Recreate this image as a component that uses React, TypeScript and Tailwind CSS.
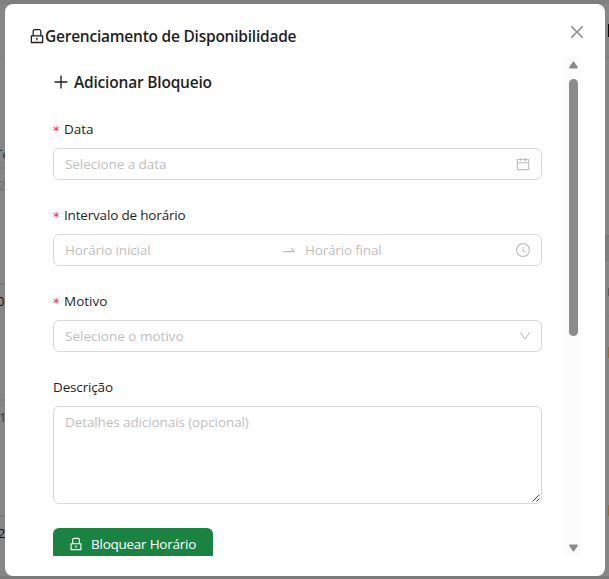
import type { ReactNode } from 'react';
import {
  AiOutlineCalendar,
  AiOutlineClockCircle,
  AiOutlineClose,
  AiOutlineDown,
  AiOutlineLock,
  AiOutlinePlus,
  AiOutlineSwapRight,
} from 'react-icons/ai';

function Field({ label, required, children }: { label: ReactNode; required?: boolean; children: ReactNode }) {
  return (
    <div className="mb-6">
      <div className="flex h-[22px] items-center mb-2 text-[13.5px] text-[#1f1f1f]">
        {required && (
          <span className="mr-1 w-[7px] pt-[3px] font-['DejaVu_Sans',sans-serif] text-[13px] leading-none text-[#ff2a2e]">*</span>
        )}
        {label}
      </div>
      {children}
    </div>
  );
}

const box =
  'flex h-8 items-center rounded-md border border-[#d9d9d9] bg-white px-[11px] text-[13.5px] text-[#bfbfbf]';

function Backdrop() {
  return (
    <div className="absolute inset-0 overflow-hidden bg-[#868686] text-[13px] text-[#111]">
      <div className="absolute inset-x-0 top-0 h-1 bg-[#7f7f7f]" />
      <div className="absolute inset-x-0 bottom-0 h-[3px] bg-[#7b7b7b]" />
      <div className="absolute left-0 top-[57px] h-px w-[5px] bg-[#7c7c7c]" />
      <div className="absolute left-0 top-[167px] h-[2px] w-[5px] bg-[#7c7c7c]" />
      <div className="absolute left-0 top-[283px] h-[2px] w-[5px] bg-[#7c7c7c]" />
      <div className="absolute left-0 top-[399px] h-[2px] w-[5px] bg-[#7c7c7c]" />
      <div className="absolute left-0 top-[515px] h-[2px] w-[5px] bg-[#7c7c7c]" />
      <span className="absolute -left-[5px] top-[145px] text-[#123f55]">Te</span>
      <span className="absolute -left-[2px] top-[176px] text-[#6b6b6b]">2</span>
      <span className="absolute -left-[3px] top-[292px]">0</span>
      <span className="absolute -left-[1px] top-[408px] text-[#123f55]">1</span>
      <span className="absolute -left-[2px] top-[524px]">2</span>
      <div className="absolute right-0 top-[24px] h-[13px] w-px bg-[#080808]" />
      <div className="absolute right-0 top-[57px] h-px w-1 bg-[#7c7c7c]" />
      <div className="absolute right-0 top-[235px] h-[26px] w-1 border-t-2 border-[#777] bg-[#7f7f7f]" />
      <div className="absolute right-0 top-[288px] h-[8px] w-px bg-[#5c5c5c]" />
      <div className="absolute right-0 top-[316px] h-px w-1 bg-[#7c7c7c]" />
      <div className="absolute right-0 top-[347px] h-[11px] w-px bg-[#9a6d1d]" />
      <div className="absolute right-0 top-[505px] h-[11px] w-px bg-[#9a6d1d]" />
    </div>
  );
}

export default function App() {
  return (
    <div className="relative h-[579px] w-[609px] overflow-hidden pl-[5px] pt-1 font-['Open_Sans','Noto_Sans',sans-serif] whitespace-nowrap">
      <Backdrop />
      <div className="relative flex h-[572px] w-[600px] flex-col rounded-lg bg-white">
        <header className="flex h-[52px] shrink-0 items-start justify-between pl-6 pr-[20px] pt-5">
          <h1 className="flex h-6 items-center text-[15.5px] font-semibold text-[#1f1f1f]">
            <AiOutlineLock className="size-4 scale-[1.14]" />
            <span className="pt-[2px] tracking-[-0.235px]">Gerenciamento de Disponibilidade</span>
          </h1>
          <AiOutlineClose className="size-4 scale-[1.14] text-[#8c8c8c]" />
        </header>
        <div className="flex h-[500px] overflow-hidden pl-12">
          <main className="w-[489px] shrink-0 pt-[14px]">
            <h2 className="mb-6 flex h-6 items-center gap-[5px] text-[15.5px] font-semibold text-[#1f1f1f]">
              <AiOutlinePlus className="size-4 scale-[1.14]" />
              <span className="pt-[2px] tracking-[-0.2px]">Adicionar Bloqueio</span>
            </h2>
            <Field required label={<span>Data</span>}>
              <div className={box}>
                <span className="flex-1 tracking-[-0.06px]">Selecione a data</span>
                <AiOutlineCalendar className="size-[14px] scale-[1.14]" />
              </div>
            </Field>
            <Field required label={<span className="tracking-[-0.18px]">Intervalo de horário</span>}>
              <div className={box}>
                <span className="w-[216px] tracking-[-0.14px]">Horário inicial</span>
                <AiOutlineSwapRight className="mr-[8px] size-4" />
                <span className="flex-1 tracking-[-0.18px]">Horário final</span>
                <AiOutlineClockCircle className="size-[14px] scale-[1.14]" />
              </div>
            </Field>
            <Field required label={<span>Motivo</span>}>
              <div className={box}>
                <span className="flex-1">Selecione o motivo</span>
                <AiOutlineDown className="-mr-px size-3 scale-[1.14]" />
              </div>
            </Field>
            <Field label={<span className="tracking-[-0.15px]">Descrição</span>}>
              <div className="flex h-[98px] justify-between rounded-md border border-[#d9d9d9] pl-[11px] text-[13.5px] leading-[22px] text-[#bfbfbf]">
                <span className="pt-1 tracking-[-0.1px]">Detalhes adicionais (opcional)</span>
                <svg className="size-[10px] self-end" viewBox="0 0 10 10" stroke="#444" strokeWidth="1">
                  <path d="M1.5 8.5 8.5 1.5M5.5 8.5 8.5 5.5" />
                </svg>
              </div>
            </Field>
            <button className="flex h-8 w-40 items-center gap-2 rounded-md bg-[#1a8342] pl-4 text-[13.5px] font-medium text-white">
              <AiOutlineLock className="size-[14px] scale-[1.14]" />
              <span className="tracking-[-0.25px]">Bloquear Horário</span>
            </button>
          </main>
          <div className="ml-6 flex w-[15px] flex-col items-center bg-[#fcfcfc]">
            <svg className="mt-[5px] h-[8px] w-[9px] shrink-0" viewBox="0 0 9 8" fill="#8b8b8b">
              <path d="M4.5.5Q5.1.5 5.5 1.2L8.8 6.3Q9 7.5 8 7.5H1Q0 7.5.2 6.3L3.5 1.2Q3.9.5 4.5.5Z" />
            </svg>
            <div className="mt-[10px] h-[257px] w-[9px] shrink-0 rounded-full bg-[#8b8b8b]" />
            <svg className="mb-[4px] mt-auto h-[8px] w-[9px] shrink-0 rotate-180" viewBox="0 0 9 8" fill="#8b8b8b">
              <path d="M4.5.5Q5.1.5 5.5 1.2L8.8 6.3Q9 7.5 8 7.5H1Q0 7.5.2 6.3L3.5 1.2Q3.9.5 4.5.5Z" />
            </svg>
          </div>
        </div>
      </div>
    </div>
  );
}
